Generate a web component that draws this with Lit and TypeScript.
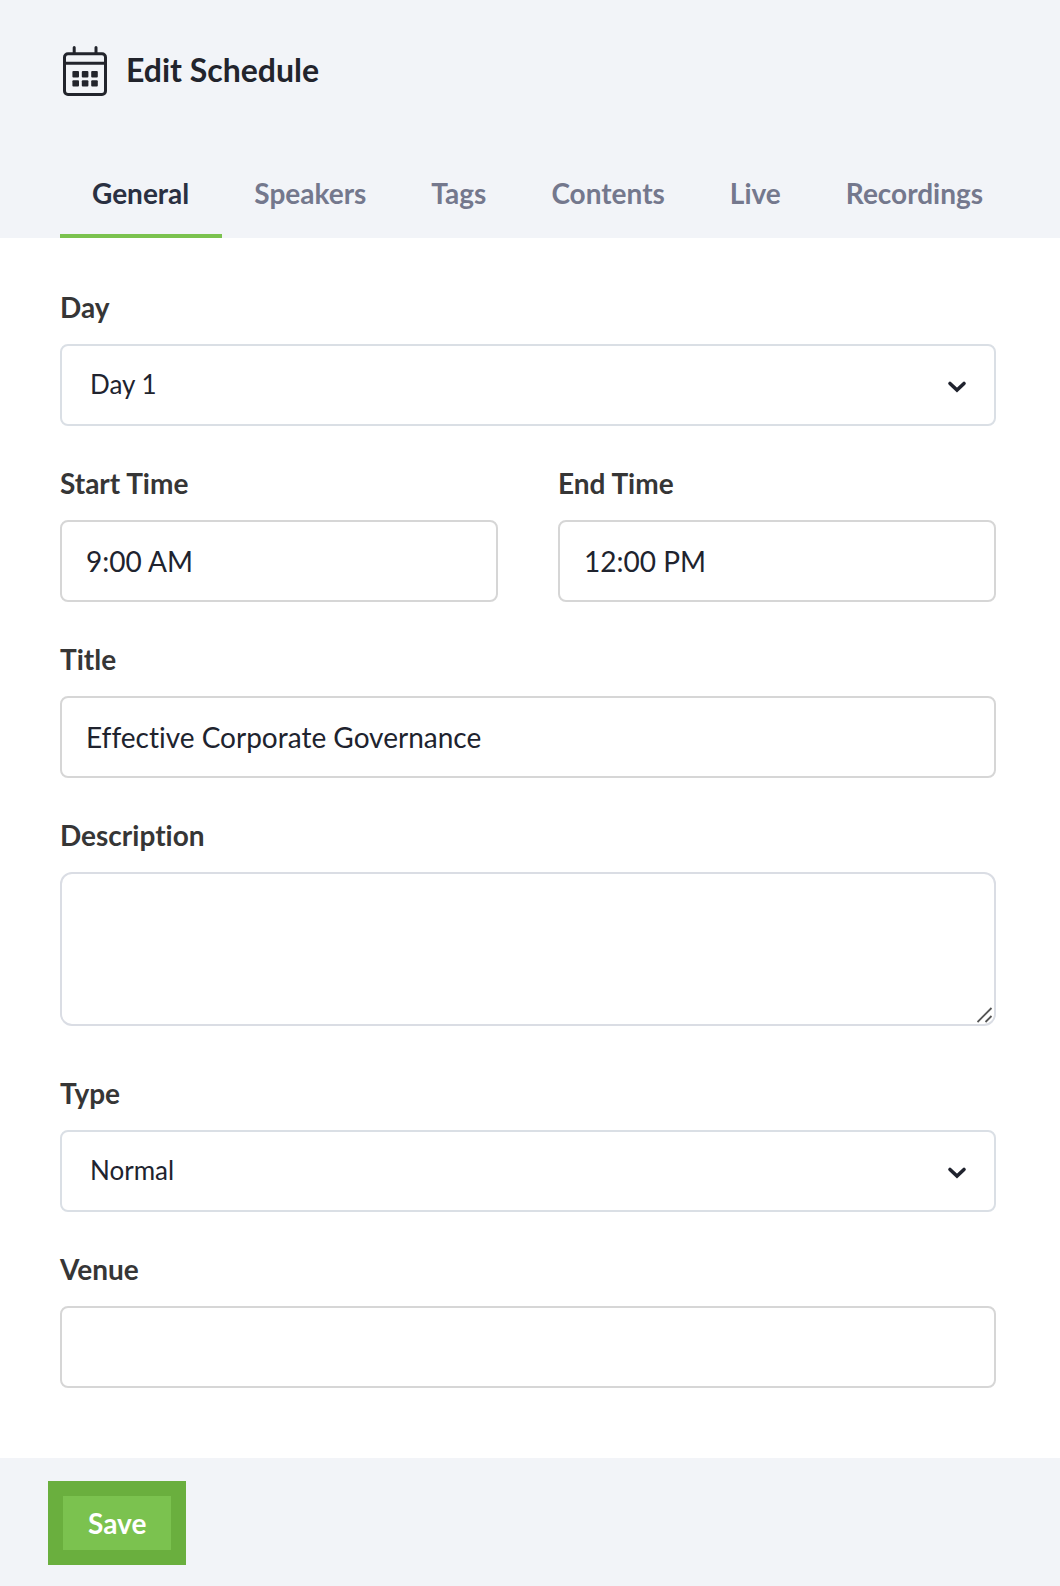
import { LitElement, html, css } from "lit";
import { customElement, state } from "lit/decorators.js";
import { classMap } from "lit/directives/class-map.js";

const TABS = ["General", "Speakers", "Tags", "Contents", "Live", "Recordings"];

@customElement("app-root")
export class AppRoot extends LitElement {
  static styles = css`
    :host {
      display: block;
      min-height: 100vh;
      background: #fff;
      color: #20232e;
      font-family: Lato, "Liberation Sans", sans-serif;
      font-size: 28px;
      line-height: 36px;
      font-variant-ligatures: none;
    }
    * {
      box-sizing: border-box;
    }
    .header {
      background: #f2f4f8;
      padding: 46px 0 0 60px;
    }
    .heading {
      display: flex;
      align-items: flex-start;
      gap: 19px;
      padding-left: 3px;
    }
    .heading-icon {
      display: block;
      flex: none;
    }
    .title {
      margin: 0;
      font-size: 32px;
      line-height: 48px;
      font-weight: 700;
      color: #22242c;
    }
    .tabs {
      display: flex;
      margin-top: 52px;
    }
    .tab {
      border: 0;
      border-bottom: 4px solid transparent;
      background: none;
      margin: 0;
      padding: 27px 33px 23px 32px;
      font: inherit;
      font-variant-ligatures: none;
      font-weight: 700;
      color: #74788d;
      cursor: pointer;
    }
    .tab.active {
      color: #2a3042;
      border-bottom-color: #7bc24f;
    }
    .form {
      display: flex;
      flex-direction: column;
      gap: 39px;
      padding: 51px 64px 70px 60px;
    }
    .row {
      display: grid;
      grid-template-columns: 1fr 1fr;
      gap: 60px;
    }
    .field {
      display: flex;
      flex-direction: column;
      gap: 19px;
      min-width: 0;
    }
    .field.roomy {
      margin-bottom: 10px;
    }
    .label {
      font-weight: 700;
      color: #363636;
    }
    .input,
    .select,
    .textarea {
      width: 100%;
      margin: 0;
      border: 2px solid #d6d6d6;
      border-radius: 8px;
      background: #fff;
      color: #20232e;
      font: inherit;
      font-variant-ligatures: none;
      outline: none;
    }
    .input {
      height: 82px;
      padding: 0 24px;
    }
    .select {
      appearance: none;
      height: 82px;
      padding: 0 64px 2px 28px;
      border-color: #dadfe5;
      font-size: 26px;
    }
    .textarea {
      display: block;
      height: 154px;
      padding: 16px 24px;
      border-color: #dadde4;
      border-radius: 12px;
      resize: vertical;
    }
    .textarea::-webkit-resizer {
      display: none;
    }
    .stack {
      display: grid;
    }
    .stack > * {
      grid-area: 1 / 1;
    }
    .chevron {
      place-self: center end;
      margin: 4px 29px 0 0;
      pointer-events: none;
    }
    .grip {
      place-self: end;
      margin: 0 3px 3px 0;
      pointer-events: none;
    }
    .footer {
      background: #f2f4f8;
      padding: 23px 48px 21px;
    }
    .save {
      display: block;
      margin: 0;
      padding: 9px 25px;
      border: 15px solid #6aaf3e;
      background: #7bc24f;
      color: #fff;
      font: inherit;
      font-weight: 700;
      cursor: pointer;
    }
  `;

  @state() private active = "General";

  private chevron() {
    return html`<svg class="chevron" width="20" height="14" viewBox="0 0 20 14" aria-hidden="true">
      <path d="M3 3.5 L10 10 L17 3.5" fill="none" stroke="#20232e" stroke-width="3.6" stroke-linecap="round" />
    </svg>`;
  }

  private select(id: string, label: string, options: string[]) {
    return html`<div class="field">
      <label class="label" for=${id}>${label}</label>
      <div class="stack">
        <select class="select" id=${id}>
          ${options.map((o) => html`<option>${o}</option>`)}
        </select>
        ${this.chevron()}
      </div>
    </div>`;
  }

  private input(id: string, label: string, value = "") {
    return html`<div class="field">
      <label class="label" for=${id}>${label}</label>
      <input class="input" id=${id} type="text" .value=${value} />
    </div>`;
  }

  render() {
    return html`
      <header class="header">
        <div class="heading">
          <svg class="heading-icon" width="44" height="50" viewBox="0 0 44 50" aria-hidden="true">
            <g fill="none" stroke="#22242c" stroke-width="3">
              <rect x="1.5" y="7.8" width="41" height="40.7" rx="3.5" />
              <path d="M1.5 17.2H42.5" />
              <path d="M11.2 1.5V7.5M33 1.5V7.5" stroke-linecap="round" />
            </g>
            <g fill="#22242c">
              <rect x="9.4" y="25" width="6.6" height="6.4" rx="1" />
              <rect x="18.8" y="25" width="6.6" height="6.4" rx="1" />
              <rect x="28.2" y="25" width="6.6" height="6.4" rx="1" />
              <rect x="9.4" y="34.2" width="6.6" height="6.4" rx="1" />
              <rect x="18.8" y="34.2" width="6.6" height="6.4" rx="1" />
              <rect x="28.2" y="34.2" width="6.6" height="6.4" rx="1" />
            </g>
          </svg>
          <h1 class="title">Edit Schedule</h1>
        </div>
        <nav class="tabs">
          ${TABS.map(
            (t) => html`<button
              type="button"
              class=${classMap({ tab: true, active: t === this.active })}
              @click=${() => (this.active = t)}
            >${t}</button>`
          )}
        </nav>
      </header>
      <form @submit=${(e: Event) => e.preventDefault()}>
        <div class="form">
          ${this.select("day", "Day", ["Day 1"])}
          <div class="row">
            ${this.input("start", "Start Time", "9:00 AM")}
            ${this.input("end", "End Time", "12:00 PM")}
          </div>
          ${this.input("title", "Title", "Effective Corporate Governance")}
          <div class="field roomy">
            <label class="label" for="description">Description</label>
            <div class="stack">
              <textarea class="textarea" id="description"></textarea>
              <svg class="grip" width="16" height="16" viewBox="0 0 16 16" aria-hidden="true">
                <path d="M0.5 15L14.5 1M8.5 15L14.5 9" fill="none" stroke="#555" stroke-width="1.8" />
              </svg>
            </div>
          </div>
          ${this.select("type", "Type", ["Normal"])}
          ${this.input("venue", "Venue")}
        </div>
        <footer class="footer">
          <button class="save" type="submit">Save</button>
        </footer>
      </form>
    `;
  }
}
